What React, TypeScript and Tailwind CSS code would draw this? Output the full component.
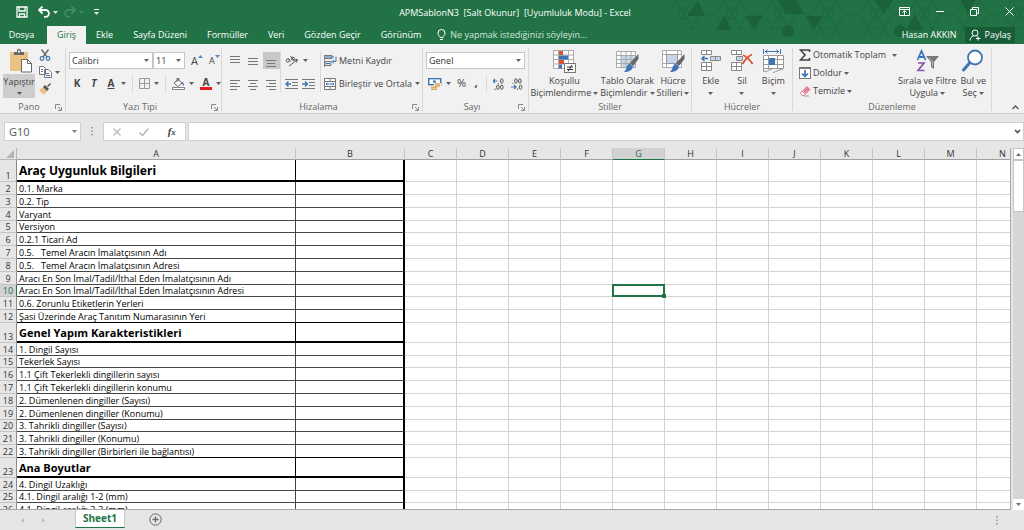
import React from 'react';
import { clsx } from 'clsx';

type IconProps = { className?: string };

const tabs = ['Ekle', 'Sayfa Düzeni', 'Formüller', 'Veri', 'Gözden Geçir', 'Görünüm'];

const columns = ['A', 'B', 'C', 'D', 'E', 'F', 'G', 'H', 'I', 'J', 'K', 'L', 'M', 'N'];

const rows = [
    { text: 'Araç Uygunluk Bilgileri', heading: true },
    { text: '0.1. Marka' },
    { text: '0.2. Tip' },
    { text: 'Varyant' },
    { text: 'Versiyon' },
    { text: '0.2.1 Ticari Ad' },
    { text: '0.5.   Temel Aracın İmalatçısının Adı' },
    { text: '0.5.   Temel Aracın İmalatçısının Adresi' },
    { text: 'Aracı En Son İmal/Tadil/İthal Eden İmalatçısının Adı' },
    { text: 'Aracı En Son İmal/Tadil/İthal Eden İmalatçısının Adresi' },
    { text: '0.6. Zorunlu Etiketlerin Yerleri' },
    { text: 'Şasi Üzerinde Araç Tanıtım Numarasının Yeri' },
    { text: 'Genel Yapım Karakteristikleri', heading: true },
    { text: '1. Dingil Sayısı' },
    { text: 'Tekerlek Sayısı' },
    { text: '1.1 Çift Tekerlekli dingillerin sayısı' },
    { text: '1.1 Çift Tekerlekli dingillerin konumu' },
    { text: '2. Dümenlenen dingiller (Sayısı)' },
    { text: '2. Dümenlenen dingiller (Konumu)' },
    { text: '3. Tahrikli dingiller (Sayısı)' },
    { text: '3. Tahrikli dingiller (Konumu)' },
    { text: '3. Tahrikli dingiller (Birbirleri ile bağlantısı)' },
    { text: 'Ana Boyutlar', heading: true },
    { text: '4. Dingil Uzaklığı' },
    { text: '4.1. Dingil aralığı 1-2 (mm)' },
    { text: '4.1. Dingil aralığı 2-3 (mm)' },
];

const Caret: React.FC<IconProps> = ({ className }) => (
    <svg viewBox="0 0 5 3" className={clsx('h-[3px] w-[5px] shrink-0', className)} aria-hidden="true">
        <path d="M0 0h5L2.500 3z" fill="currentColor" opacity=".85" />
    </svg>
);

const Launcher = () => (
    <svg viewBox="0 0 7 7" className="h-[7px] w-[7px]" fill="none" stroke="#888" aria-hidden="true">
        <path d="M.5 5V.5H5M3 3l3 3M6.500 3v3.500H3" />
    </svg>
);

const Divider = () => <span className="h-4 w-px shrink-0 bg-[#d8d8d8]" />;

/* Horizontal strokes of the alignment buttons, each line is [x, y, width] */
const Lines: React.FC<{ lines: number[][] }> = ({ lines }) => (
    <svg viewBox="0 0 12 12" className="h-3 w-3" aria-hidden="true">
        {lines.map(([x, y, w]) => (
            <rect key={y} x={x} y={y} width={w} height="1" fill="#777" />
        ))}
    </svg>
);

const PasteIcon = () => (
    <svg viewBox="0 0 24 24" className="h-6 w-6" aria-hidden="true">
        <rect x="1" y="3" width="18" height="19" rx="1" fill="#eac282" />
        <path d="M5 3h3V1.500a1.500 1.500 0 0 1 1.500-1.500h1a1.500 1.500 0 0 1 1.500 1.500V3h3v3H5z" fill="#666" />
        <rect x="9" y="1.500" width="2" height="2" fill="#f1f1f1" />
        <path d="M12.500 10.500h6l4 4v8.500h-10z" fill="#fff" stroke="#666" />
        <path d="M18.500 10.500v4h4" fill="none" stroke="#666" />
    </svg>
);

const CutIcon = () => (
    <svg viewBox="0 0 12 12" className="h-3 w-3" fill="none" aria-hidden="true">
        <path d="M2.500.5 8 8M9.500.5 4 8" stroke="#666" strokeWidth="1.300" />
        <circle cx="3" cy="9.500" r="1.800" stroke="#3e74b4" strokeWidth="1.200" />
        <circle cx="9" cy="9.500" r="1.800" stroke="#3e74b4" strokeWidth="1.200" />
    </svg>
);

const CopyIcon = () => (
    <svg viewBox="0 0 13 12" className="h-3 w-[13px]" fill="#fff" stroke="#777" aria-hidden="true">
        <path d="M.5.500h4l2 2v6h-6zM5.500 3.500h4l3 3v5h-7z" />
        <path d="M2 3.500h2M2 5.500h2M7 7.500h3M7 9.500h4" stroke="#3e74b4" />
    </svg>
);

const PainterIcon = () => (
    <svg viewBox="0 0 12 12" className="h-3 w-3" aria-hidden="true">
        <path d="M0 7l4-3 4 4-3 4z" fill="#eac282" />
        <path d="M4 4l2-2 4 4-2 2zM8 3l3-3 1 1-3 3z" fill="#555" />
    </svg>
);

const BordersIcon = () => (
    <svg viewBox="0 0 11 11" className="h-[11px] w-[11px]" fill="none" stroke="#999" aria-hidden="true">
        <path d="M.5.500h10v10H.500zM5.500.500v10M.500 5.500h10" />
    </svg>
);

const FillIcon = () => (
    <svg viewBox="0 0 13 12" className="h-3 w-[13px]" fill="none" aria-hidden="true">
        <path d="M2 5l4-3.500L10 5 6 8.500z" fill="#fff" stroke="#666" />
        <path d="M5 4V0.500h2V3" stroke="#666" />
        <path d="M9.500 4c2 0 2.500 1.500 2.500 4-1-.5-1.500-2-2.500-4z" fill="#3e74b4" />
        <rect x=".5" y="9.500" width="12" height="2" fill="#fff" stroke="#888" />
    </svg>
);

const OrientIcon = () => (
    <svg viewBox="0 0 14 12" className="h-3 w-[14px]" fill="none" stroke="#555" aria-hidden="true">
        <circle cx="2.800" cy="5.500" r="1.600" />
        <path d="M3.500 3.500l2 3M5.500 1l4 5" />
        <circle cx="7.800" cy="3.700" r="1.500" />
        <path d="M4 11l8-6M9.500 4.800 12.500 4.500 11.500 7.500" />
    </svg>
);

const IndentIcon: React.FC<{ right?: boolean }> = ({ right }) => (
    <svg viewBox="0 0 13 12" className="h-3 w-[13px]" fill="none" aria-hidden="true">
        <path d="M0 1.500h13M7 4.500h6M7 7.500h6M0 10.500h13" stroke="#777" />
        <path d={right ? 'M0 6h5M3 3.500 5.500 6 3 8.500' : 'M1 6h5M3.500 3.500 1 6l2.500 2.500'} stroke="#3e74b4" strokeWidth="1.400" />
    </svg>
);

const WrapIcon = () => (
    <svg viewBox="0 0 13 12" className="h-3 w-[13px]" fill="none" aria-hidden="true">
        <path d="M.5 0v12" stroke="#888" />
        <path d="M1 .5h7v3H1zM1 6.500h6v4H1z" fill="#dbe5f1" stroke="#777" />
        <path d="M2 2h8M2 8.500h4" stroke="#3e74b4" />
        <path d="M12 1.500v5H8.500M10 4.500l-2 2 2 2" stroke="#3e74b4" />
    </svg>
);

const MergeIcon = () => (
    <svg viewBox="0 0 12 12" className="h-3 w-3" fill="none" aria-hidden="true">
        <path d="M.5.500h11v11H.500zM.5 3.500h11M.5 8.500h11M6 .5v3M6 8.500v3" fill="#fff" stroke="#777" />
        <path d="M2 6h8M3.500 4.800 2 6l1.500 1.200M8.500 4.800 10 6 8.500 7.200" stroke="#3e74b4" />
    </svg>
);

const CurrencyIcon = () => (
    <svg viewBox="0 0 14 12" className="h-3 w-[14px]" fill="none" aria-hidden="true">
        <rect x=".7" y=".7" width="12" height="6" fill="#fff" stroke="#3e74b4" strokeWidth="1.400" />
        <circle cx="6.500" cy="3.700" r="1.400" fill="#3e74b4" />
        <path d="M6 5h7v6H6z" fill="#f1f1f1" />
        <path d="M7 6h5M7 8h5M3 9.500h6M3 11.300h6" stroke="#dfa850" strokeWidth="1.300" />
    </svg>
);

const DecimalIcon: React.FC<{ more?: boolean }> = ({ more }) => (
    <svg viewBox="0 0 12 12" className="h-3 w-3" fill="none" aria-hidden="true">
        {more ? (
            <path d="M0 3h4.500M2 1 0 3l2 2" stroke="#3e74b4" strokeWidth="1.200" />
        ) : (
            <path d="M0 9h5M3 7l2 2-2 2" stroke="#3e74b4" strokeWidth="1.200" />
        )}
        <g stroke="#555">
            {more ? (
                <>
                    <path d="M5.500 5v1M2 10.500v1.500" />
                    <ellipse cx="8.800" cy="3" rx="1.300" ry="2.200" />
                    <ellipse cx="4.900" cy="9.200" rx="1.300" ry="2.200" />
                    <ellipse cx="8.800" cy="9.200" rx="1.300" ry="2.200" />
                </>
            ) : (
                <>
                    <path d="M2 5v1M6.500 10.500v1.500" />
                    <ellipse cx="4.900" cy="3" rx="1.300" ry="2.200" />
                    <ellipse cx="8.800" cy="3" rx="1.300" ry="2.200" />
                    <ellipse cx="9.600" cy="9.200" rx="1.300" ry="2.200" />
                </>
            )}
        </g>
    </svg>
);

const ConditionalIcon = () => (
    <svg viewBox="0 0 24 24" className="h-6 w-6" aria-hidden="true">
        <path d="M1.500 1.500h20v18h-20zM1.500 6h20M1.500 10.500h20M1.500 15h20M6.500 1.500v18M16.500 1.500v18" fill="#fff" stroke="#aaa" />
        <path d="M7 2h4v4H7zM7 11h5v4H7z" fill="#d9532c" />
        <path d="M7 6.500h9v4H7zM7 15.500h3v4H7z" fill="#3e74b4" />
        <rect x="12.500" y="14.500" width="11" height="9" fill="#fff" stroke="#777" />
        <path d="M15 18h6M15 20.500h6M20 16l-4 6.500" stroke="#333" />
    </svg>
);

const BrushIcon = () => (
    <>
        <path d="M23.500 5v5l-5.500 7-3-3z" fill="#666" />
        <path d="M14.500 14.500l3.500 3c-1 4-4 5.500-9 5.500 3-2 2-7 5.500-8.500z" fill="#3e74b4" />
    </>
);

const TableFormatIcon = () => (
    <svg viewBox="0 0 24 24" className="h-6 w-6" aria-hidden="true">
        <path d="M1.500 2.500h19v16h-19z" fill="#fff" />
        <path d="M6 7h14v11H6z" fill="#c5d6ea" />
        <path d="M1.500 2.500h19v16h-19zM1.500 6.500h19M1.500 10.500h19M1.500 14.500h19M6 2.500v16M11 2.500v16M16 2.500v16" fill="none" stroke="#aaa" />
        <BrushIcon />
    </svg>
);

const CellStylesIcon = () => (
    <svg viewBox="0 0 24 24" className="h-6 w-6" aria-hidden="true">
        <path d="M1.500 1.500h19v17h-19zM1.500 5.500h19M1.500 14.500h19M5.500 1.500v17M16.500 1.500v17" fill="#fff" stroke="#aaa" />
        <path d="M5.500 5.500h11v9h-11z" fill="#c5d6ea" stroke="#999" />
        <BrushIcon />
    </svg>
);

const InsertCellsIcon = () => (
    <svg viewBox="0 0 24 24" className="h-6 w-6" aria-hidden="true">
        <path d="M2.500 1.500h10v4h-10zM7.500 1.500v4M2.500 13.500h10v8h-10zM7.500 13.500v8M2.500 17.500h10" fill="#fff" stroke="#888" />
        <path d="M11.500 7.500h10v4h-10zM16.500 7.500v4" fill="#c5d6ea" stroke="#888" />
        <path d="M3 9.500h6M5.500 7 3 9.500 5.500 12" fill="none" stroke="#3e74b4" strokeWidth="1.500" />
    </svg>
);

const DeleteCellsIcon = () => (
    <svg viewBox="0 0 24 24" className="h-6 w-6" aria-hidden="true">
        <path d="M1.500 1.500h10v4h-10zM6.500 1.500v4M1.500 13.500h10v8h-10zM6.500 13.500v8M1.500 17.500h10" fill="#fff" stroke="#888" />
        <path d="M6.500 7.500h6v4h-6z" fill="#c5d6ea" stroke="#888" />
        <path d="M13 6c4 2 7 5 9.500 9M22 5.500c-4 2-7 5-9.500 9.500" fill="none" stroke="#d9532c" strokeWidth="1.800" />
    </svg>
);

const FormatCellsIcon = () => (
    <svg viewBox="0 0 24 24" className="h-6 w-6" aria-hidden="true">
        <path d="M2.500 0v5M19.500 0v5M4 2.500h14M6.500.5l-2 2 2 2M15.500.5l2 2-2 2" fill="none" stroke="#3e74b4" />
        <path d="M2.500 6.500h20v13h-20zM2.500 10.500h20M2.500 15.500h20M7.500 6.500v13M16.500 6.500v13" fill="#fff" stroke="#999" />
        <rect x="8" y="9" width="6" height="7" fill="#3e74b4" />
        <path d="M2.500 19.500v3c4 1 4-2 8-2M12 23.500c5-1 5-3 9.500-3" fill="none" stroke="#999" />
    </svg>
);

const SumIcon = () => (
    <svg viewBox="0 0 12 12" className="h-3 w-3" fill="none" aria-hidden="true">
        <path d="M10.500 3V1H1.500L6 6l-4.500 5h9V9" stroke="#444" strokeWidth="1.600" />
    </svg>
);

const FillDownIcon = () => (
    <svg viewBox="0 0 12 12" className="h-3 w-3" fill="none" aria-hidden="true">
        <rect x=".5" y=".5" width="11" height="11" fill="#fff" stroke="#777" />
        <path d="M1 1.500h10" stroke="#777" />
        <path d="M6 3v6M3 6.500 6 9.500l3-3" stroke="#3e74b4" strokeWidth="1.700" />
    </svg>
);

const EraserIcon = () => (
    <svg viewBox="0 0 12 12" className="h-3 w-3" aria-hidden="true">
        <path d="M3.500 5.500 8 1l3.500 3.500L7 9z" fill="#e5839b" />
        <path d="M3 6l3.500 3.500-1.500 1H3L1.500 8z" fill="#fff" stroke="#e5839b" />
        <path d="M5 11h5" stroke="#999" />
    </svg>
);

const SortIcon = () => (
    <svg viewBox="0 0 24 24" className="h-6 w-6" fill="none" aria-hidden="true">
        <path d="M2.500 11 6.500 2l4 9M4 8h5" stroke="#3e74b4" strokeWidth="1.800" />
        <path d="M3 14h6L3 21.500h6.500" stroke="#8a55a8" strokeWidth="1.700" />
        <path d="M11 7h13l-5 6v7l-3-2v-5z" fill="#777" />
        <path d="M14 8.500l3.500 4v5" stroke="#bbb" />
    </svg>
);

const FindIcon = () => (
    <svg viewBox="0 0 24 24" className="h-6 w-6" fill="none" aria-hidden="true">
        <path d="M9 13.500 2.500 21" stroke="#3e74b4" strokeWidth="3" strokeLinecap="round" />
        <circle cx="14" cy="8.500" r="7" fill="#fff" stroke="#3e74b4" strokeWidth="1.800" />
    </svg>
);

const TitlePattern = () => (
    <svg viewBox="0 0 364 44" className="absolute top-0 right-0 h-11 w-[364px]" fill="none" aria-hidden="true">
        <defs>
            <pattern id="hex" width="48" height="28" patternUnits="userSpaceOnUse">
                <path d="M0 14h8l8-14h16l8 14h8M8 14l8 14h16l8-14M16 0l8 14 8-14M24 14l-8 14M24 14l8 14" stroke="#1b6339" />
                <circle cx="24" cy="14" r="5" stroke="#1b6339" />
            </pattern>
        </defs>
        <path d="M0 0h364v36H150L140 30H30L10 10z" fill="url(#hex)" opacity=".8" />
        <g fill="#1a5e36" opacity=".8">
            <path d="M27 16 38 0l7 16zM56 30l9-15 6 15zM85 16h18L94 30zM118 0h18l8 14h-18zM145 16h18l-9 14zM215 0h18l-9 14zM246 30l9-16 8 16z" />
            <circle cx="128" cy="31" r="6" />
            <circle cx="240" cy="31" r="6" />
            <path d="M300 0h16l-8 13z" />
        </g>
    </svg>
);

const Group: React.FC<{ label: string; launcher?: boolean; className: string; children: React.ReactNode }> = ({
    label,
    launcher,
    className,
    children,
}) => (
    <section className={clsx('mt-1 mb-0.5 flex shrink-0 flex-col border-r border-[#d8d8d8]', className)}>
        <div className="h-[55px]">{children}</div>
        <div className="flex h-2 items-center px-[3px] text-[#666]">
            <span className="flex-1 text-center">{label}</span>
            {launcher && (
                <button aria-label={label}>
                    <Launcher />
                </button>
            )}
        </div>
    </section>
);

const BigButton: React.FC<{ icon: React.ReactNode; lines: string[]; className?: string }> = ({ icon, lines, className }) => (
    <button className={clsx('flex flex-col items-center pt-px leading-3', className)}>
        {icon}
        <span className="pt-0.5">{lines[0]}</span>
        <span className="flex h-3 items-center gap-0.5">
            {lines[1]}
            <Caret />
        </span>
    </button>
);

const Combo: React.FC<{ label: string; value: string; className: string }> = ({ label, value, className }) => (
    <div className={clsx('relative', className)}>
        <select aria-label={label} className="h-[17px] w-full appearance-none border border-[#c6c6c6] bg-white pl-0.5 text-[#333]">
            <option>{value}</option>
        </select>
        <Caret className="pointer-events-none absolute top-[7px] right-1" />
    </div>
);

const TitleBar = () => (
    <div className="relative flex h-[26px] items-center text-white">
        <div className="flex flex-1 items-center pb-0.5 pl-4">
            <button aria-label="Kaydet">
                <svg viewBox="0 0 12 12" className="h-3 w-3" fill="none" stroke="currentColor" aria-hidden="true">
                    <path d="M1 1h10v10H1zM3 1v4h6V1M3.500 11V8h5v3" strokeWidth="1.300" />
                </svg>
            </button>
            <button aria-label="Geri Al" className="ml-2.5 flex items-center gap-[3px]">
                <svg viewBox="0 0 12 12" className="h-3 w-3" fill="none" stroke="currentColor" aria-hidden="true">
                    <path d="M1 4h6.500a3.300 3.300 0 0 1 0 6.800H6M4.500.500 1 4l3.500 3.500" strokeWidth="1.800" />
                </svg>
                <Caret />
            </button>
            <button aria-label="Yinele" className="ml-1.5 flex items-center gap-[3px] text-[#4a8c68]">
                <svg viewBox="0 0 12 12" className="h-3 w-3" fill="none" stroke="currentColor" aria-hidden="true">
                    <path d="M11 4H4.500a3.300 3.300 0 0 0 0 6.800H6M7.500.500 11 4 7.500 7.500" strokeWidth="1.500" />
                </svg>
                <Caret />
            </button>
            <button aria-label="Özelleştir" className="ml-2.5 flex flex-col items-center gap-0.5">
                <span className="h-px w-[5px] bg-white" />
                <Caret />
            </button>
        </div>
        <h1 className="whitespace-pre">{'APMSablonN3  [Salt Okunur]  [Uyumluluk Modu] - Excel'}</h1>
        <div className="flex flex-1 items-center justify-end gap-[26px] pr-2.5 pb-1">
            <button aria-label="Şerit Seçenekleri">
                <svg viewBox="0 0 11 9" className="h-[9px] w-[11px]" fill="none" stroke="currentColor" aria-hidden="true">
                    <path d="M.5.500h10v8H.500zM.500 2.500h10M5.500 8V4M3.500 5.500l2-2 2 2" />
                </svg>
            </button>
            <button aria-label="Simge Durumuna Küçült" className="h-px w-2 bg-white" />
            <button aria-label="Geri Yükle">
                <svg viewBox="0 0 9 9" className="h-[9px] w-[9px]" fill="none" stroke="currentColor" aria-hidden="true">
                    <path d="M.5 2.500h6v6h-6zM2.500 2.500v-2h6v6h-2" />
                </svg>
            </button>
            <button aria-label="Kapat">
                <svg viewBox="0 0 9 9" className="h-[9px] w-[9px]" fill="none" stroke="currentColor" aria-hidden="true">
                    <path d="m.5.500 8 8M8.500.500l-8 8" />
                </svg>
            </button>
        </div>
    </div>
);

const TabBar = () => (
    <nav className="relative flex h-[18px] items-stretch text-white">
        <button className="w-[47px] pr-1">Dosya</button>
        <button className="bg-[#f1f1f1] px-2.5 text-[#217346]">Giriş</button>
        {tabs.map((tab) => (
            <button key={tab} className="px-2.5">
                {tab}
            </button>
        ))}
        <button className="flex items-center gap-1 pl-1.5 text-[#d3e5da]">
            <svg viewBox="0 0 9 12" className="h-3 w-[9px]" fill="none" stroke="#fff" aria-hidden="true">
                <path d="M3 8.500C3 7 1 6.500 1 4a3.500 3.500 0 0 1 7 0c0 2.500-2 3-2 4.500zM3 10.500h3" />
            </svg>
            Ne yapmak istediğinizi söyleyin...
        </button>
        <div className="ml-auto flex items-center gap-2 pr-[9px]">
            <span>Hasan AKKIN</span>
            <button className="flex h-4 items-center gap-1 bg-[#185c37] px-1">
                <svg viewBox="0 0 12 12" className="h-3 w-3" fill="none" stroke="currentColor" aria-hidden="true">
                    <circle cx="6" cy="4" r="3" />
                    <path d="M1 11.500c0-2.500 1.500-4 3.500-4.500M7.500 7l1 .5M9 7.500v4M7 9.500h4.500" />
                </svg>
                Paylaş
            </button>
        </div>
    </nav>
);

const Ribbon = () => (
    <div className="flex h-[70px] overflow-hidden border-b border-[#d2d2d2] bg-[#f1f1f1] text-[#444]">
        <Group label="Pano" launcher className="w-[66px]">
            <div className="flex gap-1 pl-[3px]">
                <button className="flex w-8 flex-col items-center">
                    <span className="flex h-[26px] items-center justify-center pl-1">
                        <PasteIcon />
                    </span>
                    <span className="flex h-6 w-full flex-col items-center gap-1 bg-[#cdcdcd] pt-0.5 leading-3">
                        Yapıştır
                        <Caret />
                    </span>
                </button>
                <div className="flex flex-col items-start gap-[5px] pt-px">
                    <button aria-label="Kes">
                        <CutIcon />
                    </button>
                    <button aria-label="Kopyala" className="flex items-center gap-[3px]">
                        <CopyIcon />
                        <Caret />
                    </button>
                    <button aria-label="Biçim Boyacısı">
                        <PainterIcon />
                    </button>
                </div>
            </div>
        </Group>

        <Group label="Yazı Tipi" launcher className="w-[156px]">
            <div className="flex flex-col gap-1.5 pt-1 pl-[3px]">
                <div className="flex h-[17px] items-center">
                    <Combo label="Yazı Tipi" value="Calibri" className="w-[84px]" />
                    <Combo label="Yazı Tipi Boyutu" value="11" className="w-8" />
                    <button aria-label="Büyüt" className="ml-1.5 flex items-start">
                        <span className="text-[11px] leading-3">A</span>
                        <Caret className="rotate-180 text-[#3e74b4]" />
                    </button>
                    <button aria-label="Küçült" className="ml-1.5 flex items-start">
                        <span className="leading-3">A</span>
                        <Caret className="text-[#3e74b4]" />
                    </button>
                </div>
                <div className="flex h-[17px] items-center text-[10px] font-bold">
                    <button className="w-4">K</button>
                    <button className="w-[18px] italic">T</button>
                    <button className="w-4 underline">A</button>
                    <Caret className="mr-1.5 ml-0.5" />
                    <Divider />
                    <button aria-label="Kenarlıklar" className="ml-1.5 flex items-center gap-1">
                        <BordersIcon />
                        <Caret />
                    </button>
                    <span className="w-1.5" />
                    <Divider />
                    <button aria-label="Dolgu Rengi" className="ml-1.5 flex items-center gap-1">
                        <FillIcon />
                        <Caret />
                    </button>
                    <button aria-label="Yazı Tipi Rengi" className="ml-1.5 flex items-center gap-1">
                        <span className="w-3 border-b-[3px] border-[#e81a1a] leading-[9px]">A</span>
                        <Caret />
                    </button>
                </div>
            </div>
        </Group>

        <Group label="Hizalama" launcher className="w-[201px]">
            <div className="flex h-11 pt-1">
                <div className="grid w-[58px] grid-cols-3 grid-rows-[17px_17px] place-items-center gap-y-1.5 pl-1">
                    <button aria-label="Üste Hizala">
                        <Lines lines={[[1, 1, 10], [1, 4, 10], [1, 7, 10]]} />
                    </button>
                    <button aria-label="Ortaya Hizala">
                        <Lines lines={[[1, 3, 10], [1, 6, 10], [1, 9, 10]]} />
                    </button>
                    <button aria-label="Alta Hizala" className="flex h-[17px] w-[17px] items-center justify-center bg-[#c8c8c8]">
                        <Lines lines={[[1, 5, 10], [2, 8, 8], [1, 11, 10]]} />
                    </button>
                    <button aria-label="Sola Hizala">
                        <Lines lines={[[1, 2, 10], [1, 5, 7], [1, 8, 10], [1, 11, 7]]} />
                    </button>
                    <button aria-label="Ortala">
                        <Lines lines={[[1, 2, 10], [3, 5, 6], [1, 8, 10], [3, 11, 6]]} />
                    </button>
                    <button aria-label="Sağa Hizala">
                        <Lines lines={[[1, 2, 10], [4, 5, 7], [1, 8, 10], [4, 11, 7]]} />
                    </button>
                </div>
                <div className="flex w-10 flex-col gap-1.5 border-l border-[#d8d8d8] pl-1">
                    <button aria-label="Yön" className="flex h-[17px] items-center gap-1">
                        <OrientIcon />
                        <Caret />
                    </button>
                    <div className="flex h-[17px] items-center gap-1">
                        <button aria-label="Girintiyi Azalt">
                            <IndentIcon />
                        </button>
                        <button aria-label="Girintiyi Artır">
                            <IndentIcon right />
                        </button>
                    </div>
                </div>
                <div className="flex flex-1 flex-col gap-1.5 border-l border-[#d8d8d8] pl-[3px]">
                    <button className="flex h-[17px] items-center gap-0.5">
                        <WrapIcon />
                        Metni Kaydır
                    </button>
                    <button className="flex h-[17px] items-center gap-[3px] whitespace-nowrap">
                        <MergeIcon />
                        Birleştir ve Ortala
                        <Caret />
                    </button>
                </div>
            </div>
        </Group>

        <Group label="Sayı" launcher className="w-[106px]">
            <div className="flex flex-col gap-1.5 px-[3px] pt-1">
                <Combo label="Sayı Biçimi" value="Genel" className="w-full" />
                <div className="flex h-[17px] items-center">
                    <button aria-label="Finansal Sayı Biçimi" className="ml-0.5 flex items-center gap-1">
                        <CurrencyIcon />
                        <Caret />
                    </button>
                    <button className="ml-1.5 text-[11px]">%</button>
                    <button className="w-5 text-[11px] font-bold">,</button>
                    <Divider />
                    <button aria-label="Ondalık Artır" className="ml-1.5">
                        <DecimalIcon more />
                    </button>
                    <button aria-label="Ondalık Azalt" className="ml-1.5">
                        <DecimalIcon />
                    </button>
                </div>
            </div>
        </Group>

        <Group label="Stiller" className="w-[163px]">
            <div className="flex justify-center gap-0.5 whitespace-nowrap">
                <BigButton icon={<ConditionalIcon />} lines={['Koşullu', 'Biçimlendirme']} />
                <BigButton icon={<TableFormatIcon />} lines={['Tablo Olarak', 'Biçimlendir']} />
                <BigButton icon={<CellStylesIcon />} lines={['Hücre', 'Stilleri']} />
            </div>
        </Group>

        <Group label="Hücreler" className="w-[101px]">
            <div className="grid grid-cols-3 px-[3px]">
                <BigButton icon={<InsertCellsIcon />} lines={['Ekle', '']} />
                <BigButton icon={<DeleteCellsIcon />} lines={['Sil', '']} />
                <BigButton icon={<FormatCellsIcon />} lines={['Biçim', '']} />
            </div>
        </Group>

        <Group label="Düzenleme" className="w-[199px]">
            <div className="flex pl-1.5">
                <div className="flex w-[99px] flex-col items-start gap-1.5 pt-px">
                    <button className="flex h-3 items-center gap-0.5 whitespace-nowrap">
                        <SumIcon />
                        Otomatik Toplam
                        <Caret className="ml-1" />
                    </button>
                    <button className="flex h-3 items-center gap-0.5">
                        <FillDownIcon />
                        Doldur
                        <Caret />
                    </button>
                    <button className="flex h-3 items-center gap-0.5">
                        <EraserIcon />
                        Temizle
                        <Caret />
                    </button>
                </div>
                <BigButton icon={<SortIcon />} lines={['Sırala ve Filtre', 'Uygula']} className="whitespace-nowrap" />
                <BigButton icon={<FindIcon />} lines={['Bul ve', 'Seç']} className="ml-1 whitespace-nowrap" />
            </div>
        </Group>

        <button aria-label="Şeridi Daralt" className="mt-auto mr-[5px] mb-0.5 ml-auto">
            <svg viewBox="0 0 7 7" className="h-[7px] w-[7px]" fill="none" stroke="#555" aria-hidden="true">
                <path d="m.5 5 3-3 3 3" strokeWidth="1.300" />
            </svg>
        </button>
    </div>
);

const Dots = () => (
    <svg viewBox="0 0 2 9" className="h-[9px] w-0.5" fill="#a5a5a5" aria-hidden="true">
        <path d="M0 0h2v1.500H0zM0 3.500h2V5H0zM0 7h2v1.500H0z" />
    </svg>
);

const FormulaBar = () => (
    <div className="flex h-[34px] items-start pt-2 pl-1">
        <div className="relative w-[77px]">
            <input
                aria-label="Ad Kutusu"
                defaultValue="G10"
                className="block h-[19px] w-full border border-[#d0d0d0] bg-white pl-1 text-[11px] text-[#555]"
            />
            <Caret className="absolute top-2 right-1 text-[#666]" />
        </div>
        <div className="flex h-[19px] w-[22px] items-center justify-center">
            <Dots />
        </div>
        <div className="flex h-[19px] w-[83px] items-center justify-around border border-[#d0d0d0] bg-white">
            <button aria-label="İptal">
                <svg viewBox="0 0 8 8" className="h-2 w-2" fill="none" stroke="#b5b5b5" aria-hidden="true">
                    <path d="m.5.500 7 7M7.500.500l-7 7" strokeWidth="1.300" />
                </svg>
            </button>
            <button aria-label="Gir">
                <svg viewBox="0 0 10 8" className="h-2 w-2.5" fill="none" stroke="#b5b5b5" aria-hidden="true">
                    <path d="m.5 4.500 3 3 6-7" strokeWidth="1.500" />
                </svg>
            </button>
            <button className="font-['Liberation_Serif',serif] text-[11px] leading-3 font-bold text-[#444] italic">
                f<span className="text-[9px]">x</span>
            </button>
        </div>
        <div className="relative ml-0.5 flex-1">
            <input aria-label="Formül Çubuğu" className="block h-[19px] w-full border border-[#d0d0d0] bg-white px-1" />
            <svg viewBox="0 0 7 5" className="absolute top-[7px] right-[3px] h-[5px] w-[7px]" fill="none" stroke="#555" aria-hidden="true">
                <path d="m1 1 2.500 2.500L6 1" strokeWidth="1.600" />
            </svg>
        </div>
    </div>
);

const rowHeight = (row: number, heading?: boolean) => {
    if (heading) return row === 1 ? 'h-[22px]' : 'h-5';
    return row % 5 === 0 ? 'h-3' : 'h-[13px]';
};

const Sheet = () => (
    <table className="w-[1029px] table-fixed border-separate border-spacing-0 bg-white">
        <colgroup>
            <col className="w-[17px]" />
            <col className="w-[279px]" />
            <col className="w-[109px]" />
            {columns.slice(2).map((column) => (
                <col key={column} className="w-[52px]" />
            ))}
        </colgroup>
        <thead>
            <tr className="h-3 bg-[#e6e6e6] text-[#333]">
                <td className="border-r border-b border-[#b5b5b5] p-0">
                    <svg viewBox="0 0 8 8" className="mr-0.5 ml-auto h-2 w-2" fill="#b5b5b5" aria-hidden="true">
                        <path d="M8 0v8H0z" />
                    </svg>
                </td>
                {columns.map((column) => (
                    <th
                        key={column}
                        scope="col"
                        className={clsx(
                            'border-r border-b border-r-[#c4c4c4] p-0 text-center leading-[10px] font-normal',
                            column === 'G' ? 'border-b-[#217346] bg-[#d2d2d2] text-[#217346]' : 'border-b-[#a0a0a0]',
                        )}
                    >
                        {column}
                    </th>
                ))}
            </tr>
        </thead>
        <tbody>
            {rows.map(({ text, heading }, index) => {
                const row = index + 1;
                const beforeHeading = rows[index + 1]?.heading;
                const line = clsx(
                    heading && 'border-b-2 border-b-black',
                    !heading && (beforeHeading ? 'border-b border-b-black' : 'border-b border-b-[#444]'),
                );
                return (
                    <tr key={row} className={rowHeight(row, heading)}>
                        <th
                            scope="row"
                            className={clsx(
                                'border-r border-b border-b-[#c4c4c4] p-0 text-center align-bottom leading-[10px] font-normal',
                                row === 10 ? 'border-r-[#217346] bg-[#d2d2d2] text-[#217346]' : 'border-r-[#8a8a8a] bg-[#e6e6e6] text-[#333]',
                            )}
                        >
                            {row}
                        </th>
                        <td
                            className={clsx(
                                'border-r p-0 whitespace-pre text-black',
                                line,
                                heading && 'border-r-black pl-0.5 leading-[15px] font-bold',
                                heading && (row === 1 ? "font-['Noto_Sans',sans-serif] text-[12px]" : 'text-[11px]'),
                                !heading && 'border-r-[#444] pl-0.5 align-bottom leading-[10px]',
                            )}
                        >
                            {text}
                        </td>
                        <td className={clsx('border-r-2 border-r-black p-0', line)} />
                        {columns.slice(2).map((column) => (
                            <td key={column} className="relative border-r border-b border-[#d4d4d4] p-0">
                                {column === 'G' && row === 10 && (
                                    <span className="absolute -inset-px z-10 border-2 border-[#217346]">
                                        <span className="absolute -right-[3px] -bottom-[3px] h-1 w-1 bg-[#217346]" />
                                    </span>
                                )}
                            </td>
                        ))}
                    </tr>
                );
            })}
        </tbody>
    </table>
);

const ScrollBar = () => (
    <div className="flex w-[11px] flex-col bg-[#d6d6d6]">
        <button aria-label="Yukarı" className="flex h-3 items-center justify-center border border-[#c6c6c6] bg-white text-[#555]">
            <Caret className="rotate-180" />
        </button>
        <div className="h-[52px] border border-[#c6c6c6] bg-white" />
        <button aria-label="Aşağı" className="mt-auto flex h-[11px] items-center justify-center bg-white text-[#555]">
            <Caret />
        </button>
    </div>
);

const SheetTabs = () => (
    <footer className="flex h-5 items-start bg-[#e6e6e6]">
        <div className="flex h-5 w-[75px] items-center gap-4 pl-5 text-[#b8b8b8]">
            <button aria-label="Önceki">
                <Caret className="rotate-90" />
            </button>
            <button aria-label="Sonraki">
                <Caret className="-rotate-90" />
            </button>
        </div>
        <button className="h-[18px] border-x border-b border-[#217346] border-x-[#c6c6c6] bg-white px-[7px] text-[10px] font-bold text-[#217346]">
            Sheet1
        </button>
        <button aria-label="Yeni Sayfa" className="mt-[3px] ml-6">
            <svg viewBox="0 0 13 13" className="h-[13px] w-[13px]" fill="none" stroke="#666" aria-hidden="true">
                <circle cx="6.500" cy="6.500" r="5.700" />
                <path d="M6.500 3.500v6M3.500 6.500h6" strokeWidth="1.300" />
            </svg>
        </button>
        <div className="mt-1.5 mr-[26px] ml-auto">
            <Dots />
        </div>
    </footer>
);

export default function App() {
    return (
        <div className="flex h-screen flex-col overflow-hidden bg-[#e6e6e6] font-['Open_Sans','Noto_Sans',sans-serif] text-[9px]">
            <header className="relative bg-[#217346]">
                <TitlePattern />
                <TitleBar />
                <TabBar />
            </header>
            <Ribbon />
            <FormulaBar />
            <main className="flex min-h-0 flex-1 gap-0.5">
                <div className="min-w-0 flex-1 overflow-hidden border-r border-b border-[#a8a8a8]">
                    <Sheet />
                </div>
                <ScrollBar />
            </main>
            <SheetTabs />
        </div>
    );
}
